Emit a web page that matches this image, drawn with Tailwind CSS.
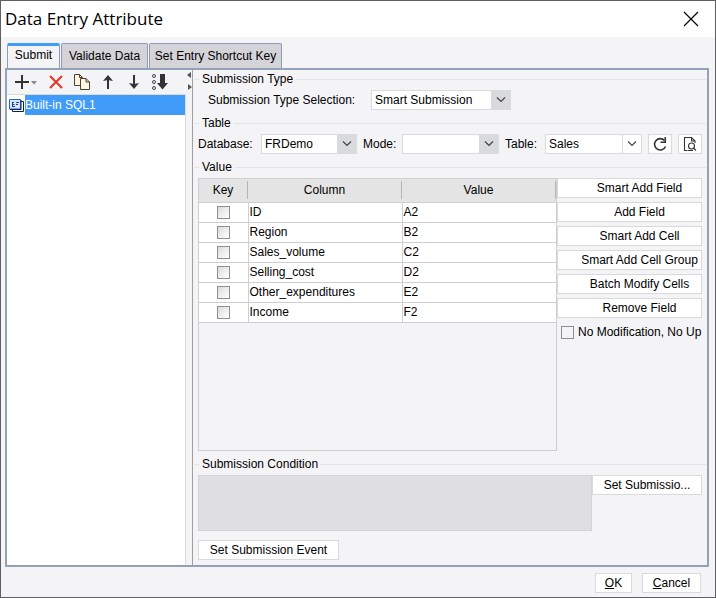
<!DOCTYPE html>
<html lang="en">
<head>
  <meta charset="UTF-8"/>
  <meta name="viewport" content="width=device-width, initial-scale=1.0"/>
  <title>Data Entry Attribute</title>
  <script src="https://cdn.jsdelivr.net/npm/@tailwindcss/browser@4"></script>
</head>
<body class="min-h-screen flex flex-col bg-[#f4f4f7] border border-[#606064] font-['Liberation_Sans',Arial,sans-serif] text-[12px] leading-[16px] text-black">

  <header class="h-9 bg-white flex items-center justify-between pl-1 pr-4">
    <h1 class="font-['Open_Sans','Noto_Sans',sans-serif] text-[17px] leading-[24px]">Data Entry Attribute</h1>
    <button type="button" aria-label="Close" class="w-4 h-4">
      <svg viewBox="0 0 16 16" class="w-4 h-4" fill="none" stroke="#000" stroke-width="1.2"><path d="M1 1l14 14M15 1L1 15"/></svg>
    </button>
  </header>

  <!-- tabs -->
  <nav class="flex items-end gap-px px-1.5 pt-1.5 h-[31px]">
    <button type="button" class="w-[53px] h-[25px] pb-1 bg-[#f4f4f7] border-x border-[#8e9db3] border-t-3 border-t-[#419bf9] rounded-t-xs">Submit</button>
    <button type="button" class="w-[87px] h-[25px] bg-[#d4d4d8] border border-b-0 border-[#8e9db3] rounded-t-xs whitespace-nowrap">Validate Data</button>
    <button type="button" class="w-[133px] h-[25px] bg-[#d4d4d8] border border-b-0 border-[#8e9db3] rounded-t-xs whitespace-nowrap">Set Entry Shortcut Key</button>
  </nav>

  <main class="flex-1 flex mx-1 mr-[6px] border-2 border-[#93a2b7]">

    <!-- left: list of submissions -->
    <aside class="w-[186px] shrink-0 flex border-r border-[#a0a0a0]">
      <div class="flex-1 flex flex-col">
        <div class="h-[25px] flex items-center gap-2.5 pl-[7px] border-b border-[#d9dadd]">
          <button type="button" aria-label="Add" class="w-6 h-4">
            <svg viewBox="0 0 24 16" class="w-6 h-4"><path d="M1 8h14M8 1v14" stroke="#333" stroke-width="2"/><path d="M17 7h6l-3 3.500z" fill="#888"/></svg>
          </button>
          <button type="button" aria-label="Remove" class="w-4 h-4">
            <svg viewBox="0 0 16 16" class="w-4 h-4"><path d="M2 2l12 12M14 2L2 14" stroke="#e33b32" stroke-width="2.200"/></svg>
          </button>
          <button type="button" aria-label="Copy" class="w-4 h-4">
            <svg viewBox="0 0 16 16" class="w-4 h-4" fill="#fff6e0" stroke="#4a4238" stroke-width="1"><path d="M.5.5h5l3 3v8h-8z"/><path d="M5.500.5v3h3" fill="none"/><path d="M6.500 4.500h5.500l3.500 3.500v7.500h-9z"/><path d="M12 4.500V8h3.500" fill="none"/></svg>
          </button>
          <button type="button" aria-label="Move up" class="w-4 h-4">
            <svg viewBox="0 0 16 16" class="w-4 h-4"><path d="M8 3v12" stroke="#333" stroke-width="2"/><path d="M8 1l5 6-5-1-5 1z" fill="#333"/></svg>
          </button>
          <button type="button" aria-label="Move down" class="w-4 h-4">
            <svg viewBox="0 0 16 16" class="w-4 h-4"><path d="M8 1v12" stroke="#333" stroke-width="2"/><path d="M8 15l5-6-5 1-5-1z" fill="#333"/></svg>
          </button>
          <button type="button" aria-label="Sort" class="w-4 h-4">
            <svg viewBox="0 0 16 16" class="w-4 h-4"><g fill="none" stroke="#444"><circle cx="2" cy="2" r="1.500"/><circle cx="2" cy="8" r="1.500"/><circle cx="2" cy="14" r="1.500"/></g><path d="M8 0h5v9h3l-5.500 6.500L5 9h3z" fill="#333"/></svg>
          </button>
        </div>
        <ul class="flex-1 bg-white border-r border-[#d9dadd]">
          <li class="h-5 flex items-center">
            <svg viewBox="0 0 15 13" class="w-[15px] h-[13px] ml-0.5"><path d="M3.500 2.500h11v10h-11z" fill="#fff" stroke="#0b1f66"/><path d="M.5.5h11v9.500H.5z" fill="#d5e6fa" stroke="#2b62c0"/><path d="M12 1v9.500H1" fill="none" stroke="#0b1f66"/><path d="M3 3.500h2M3.500 4v4M7 3.500h3M3.500 5.500h2M7 5.500h2M4 7.500h2" stroke="#1c3f8f" fill="none"/></svg>
            <span class="flex-1 h-5 leading-[20px] bg-[#419bf9] text-white ml-px">Built-in SQL1</span>
          </li>
        </ul>
      </div>
      <div class="w-1.5 pt-0.5">
        <svg viewBox="0 0 6 18" class="w-1.5 h-[18px]" fill="#555"><path d="M5 0v6L1 3zM2 12v6l4-3z"/></svg>
      </div>
    </aside>

    <!-- right: settings -->
    <section class="flex-1 min-w-0 flex flex-col pl-[5px] pr-[5px] pb-[5px]">
      <h2 class="h-[18px] -ml-[3px] -mr-1 flex items-center gap-[3px]"><span class="w-1 h-px bg-[#e3e3e6]"></span>Submission Type<span class="flex-1 h-px bg-[#e3e3e6]"></span></h2>
      <div class="mt-0.5 pl-2.5 flex items-center">
        <label for="subtype" class="w-[163px]">Submission Type Selection:</label>
        <span class="relative w-[140px]">
          <select id="subtype" class="block w-full h-5 pl-[3px] bg-white border border-[#d9dadd] appearance-none"><option>Smart Submission</option></select>
          <span class="absolute inset-y-0 right-0 w-5 bg-[#d9dadd] flex items-center justify-center pointer-events-none"><svg viewBox="0 0 10 6" class="w-2.5 h-1.5" fill="none" stroke="#444" stroke-width="1.200"><path d="M1 .5l4 4 4-4"/></svg></span>
        </span>
      </div>

      <h2 class="mt-1 h-[18px] -ml-[3px] -mr-1 flex items-center gap-[3px]"><span class="w-1 h-px bg-[#e3e3e6]"></span>Table<span class="flex-1 h-px bg-[#e3e3e6]"></span></h2>
      <div class="mt-0.5 flex items-center">
        <label for="database" class="w-[63px]">Database:</label>
        <span class="relative w-24">
          <select id="database" class="block w-full h-5 pl-[3px] bg-white border border-[#d9dadd] appearance-none"><option>FRDemo</option></select>
          <span class="absolute inset-y-0 right-0 w-5 bg-[#d9dadd] flex items-center justify-center pointer-events-none"><svg viewBox="0 0 10 6" class="w-2.5 h-1.5" fill="none" stroke="#444" stroke-width="1.200"><path d="M1 .5l4 4 4-4"/></svg></span>
        </span>
        <label for="mode" class="w-[39px] ml-1.5">Mode:</label>
        <span class="relative w-[97px]">
          <select id="mode" class="block w-full h-5 pl-[3px] bg-white border border-[#d9dadd] appearance-none"><option></option></select>
          <span class="absolute inset-y-0 right-0 w-5 bg-[#d9dadd] flex items-center justify-center pointer-events-none"><svg viewBox="0 0 10 6" class="w-2.5 h-1.5" fill="none" stroke="#444" stroke-width="1.200"><path d="M1 .5l4 4 4-4"/></svg></span>
        </span>
        <label for="table" class="w-10 ml-1.5">Table:</label>
        <span class="relative w-[97px]">
          <select id="table" class="block w-full h-5 pl-[3px] bg-white border border-[#d9dadd] appearance-none"><option>Sales</option></select>
          <span class="absolute inset-y-0 right-0 w-5 bg-white border border-[#d9dadd] flex items-center justify-center pointer-events-none"><svg viewBox="0 0 10 6" class="w-2.5 h-1.5" fill="none" stroke="#444" stroke-width="1.200"><path d="M1 .5l4 4 4-4"/></svg></span>
        </span>
        <button type="button" aria-label="Refresh" class="ml-1.5 w-6 h-5 bg-white border border-[#d9dadd] flex items-center justify-center">
          <svg viewBox="0 0 16 16" class="w-4 h-4"><path d="M12.500 4.500A5.700 5.700 0 1 0 13.500 10.500" fill="none" stroke="#333" stroke-width="1.600"/><path d="M14 1v6H8.500V5.500h4V1z" fill="#333"/></svg>
        </button>
        <button type="button" aria-label="Preview table" class="ml-1.5 w-6 h-5 bg-white border border-[#d9dadd] flex items-center justify-center">
          <svg viewBox="0 0 16 16" class="w-4 h-4" fill="none" stroke="#333" stroke-width="1.100"><path d="M5.500 14.500H2.500V1.500h7l3.500 3.500v2M9.500 1.500V5H13"/><circle cx="9.500" cy="10" r="3"/><path d="M11.500 12l2.500 2.500M6 14.500h5"/></svg>
        </button>
      </div>

      <h2 class="mt-1 h-[18px] -ml-[3px] -mr-1 flex items-center gap-[3px]"><span class="w-1 h-px bg-[#e3e3e6]"></span>Value<span class="flex-1 h-px bg-[#e3e3e6]"></span></h2>
      <div class="mt-0.5 flex-1 flex">
        <div class="flex-1 border border-[#cfcfd2]">
          <table class="w-full table-fixed border-collapse">
            <thead>
              <tr class="h-[23px] bg-[#e4e4e4]">
                <th class="w-[49px] p-0 font-normal"><div class="h-[18px] leading-[18px] border-r border-[#b8b5aa]">Key</div></th>
                <th class="w-[154px] p-0 font-normal"><div class="h-[18px] leading-[18px] border-r border-[#b8b5aa]">Column</div></th>
                <th class="p-0 font-normal"><div class="h-[18px] leading-[18px] border-r border-[#b8b5aa]">Value</div></th>
              </tr>
            </thead>
            <tbody id="fields" class="bg-white"></tbody>
          </table>
        </div>
        <div class="w-[145px] flex flex-col gap-1">
          <button type="button" class="h-5 pl-5 bg-white border border-[#d9dadd] whitespace-nowrap">Smart Add Field</button>
          <button type="button" class="h-5 pl-5 bg-white border border-[#d9dadd] whitespace-nowrap">Add Field</button>
          <button type="button" class="h-5 pl-5 bg-white border border-[#d9dadd] whitespace-nowrap">Smart Add Cell</button>
          <button type="button" class="h-5 pl-5 bg-white border border-[#d9dadd] whitespace-nowrap">Smart Add Cell Group</button>
          <button type="button" class="h-5 pl-5 bg-white border border-[#d9dadd] whitespace-nowrap">Batch Modify Cells</button>
          <button type="button" class="h-5 pl-5 bg-white border border-[#d9dadd] whitespace-nowrap">Remove Field</button>
          <label class="h-5 pl-1 flex items-center gap-1 overflow-hidden whitespace-nowrap">
            <input type="checkbox" class="appearance-none w-[13px] h-[13px] shrink-0 border border-[#8f8f8f] bg-[#f4f4f7] checked:bg-[#419bf9]"/>No Modification, No Up
          </label>
        </div>
      </div>

      <h2 class="mt-1 h-[18px] -ml-[3px] -mr-1 flex items-center gap-[3px]"><span class="w-1 h-px bg-[#e3e3e6]"></span>Submission Condition<span class="flex-1 h-px bg-[#e3e3e6]"></span></h2>
      <div class="mt-0.5 flex items-start">
        <textarea aria-label="Submission Condition" disabled class="flex-1 h-14 bg-[#dfdfe1] border border-[#d4d4d8] resize-none"></textarea>
        <button type="button" class="w-[110px] h-5 bg-white border border-[#d9dadd]">Set Submissio...</button>
      </div>
      <button type="button" class="mt-[9px] w-[141px] h-5 bg-white border border-[#d9dadd]">Set Submission Event</button>
    </section>
  </main>

  <footer class="flex justify-end gap-2.5 pt-1.5 pb-1 pr-3.5">
    <button type="button" class="w-[37px] h-5 bg-white border border-[#d9dadd]"><u>O</u>K</button>
    <button type="button" class="w-[59px] h-5 bg-white border border-[#d9dadd]"><u>C</u>ancel</button>
  </footer>

  <script>
    const fields = [
      ['ID', 'A2'],
      ['Region', 'B2'],
      ['Sales_volume', 'C2'],
      ['Selling_cost', 'D2'],
      ['Other_expenditures', 'E2'],
      ['Income', 'F2']
    ];
    document.getElementById('fields').innerHTML = fields.map(([name, cell]) => `
      <tr class="h-5">
        <td class="p-0 border-y border-r border-[#cfcfd2]"><input type="checkbox" aria-label="${name} is key" class="block mx-auto appearance-none w-[13px] h-[13px] border border-[#8f8f8f] bg-linear-to-br from-[#dcdcdc] to-white checked:bg-[#419bf9]"/></td>
        <td class="p-0 pl-px border border-[#cfcfd2]">${name}</td>
        <td class="p-0 pl-px border-y border-l border-[#cfcfd2]">${cell}</td>
      </tr>`).join('');
  </script>
</body>
</html>
